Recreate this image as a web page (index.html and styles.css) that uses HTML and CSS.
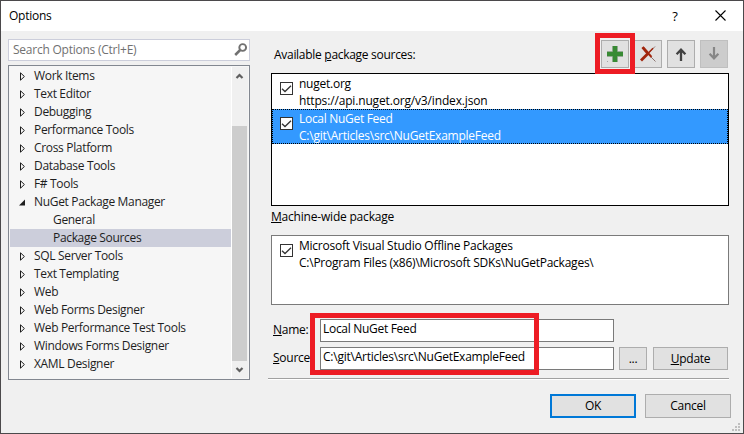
FILE: index.html
```html
<!DOCTYPE html>
<html lang="en">
<head>
<meta charset="utf-8">
<title>Options</title>
<link rel="stylesheet" href="styles.css">
</head>
<body>
<div class="window">
  <header class="titlebar">
    <h1 class="title">Options</h1>
    <span class="help">?</span>
    <svg class="close" width="11" height="11" viewBox="0 0 11 11"><path d="M.5 .5L10.5 10.5M10.5 .5L.5 10.5" stroke="#000" stroke-width="1.1" fill="none"/></svg>
  </header>
  <main class="content">
    <aside class="side">
      <div class="search"><span>Search Options (Ctrl+E)</span>
        <svg width="14" height="14" viewBox="0 0 14 14"><circle cx="8.7" cy="4.5" r="3.4" fill="none" stroke="#717171" stroke-width="1.9"/><path d="M6.2 7L1.2 12" stroke="#717171" stroke-width="2.5"/></svg>
      </div>
      <div class="tree">
        <ul class="items">
          <li><svg class="arrow" width="6" height="9" viewBox="0 0 6 9"><path d="M.5 .8V8.2L4.4 4.5z"/></svg>Work Items</li>
          <li><svg class="arrow" width="6" height="9" viewBox="0 0 6 9"><path d="M.5 .8V8.2L4.4 4.5z"/></svg>Text Editor</li>
          <li><svg class="arrow" width="6" height="9" viewBox="0 0 6 9"><path d="M.5 .8V8.2L4.4 4.5z"/></svg>Debugging</li>
          <li><svg class="arrow" width="6" height="9" viewBox="0 0 6 9"><path d="M.5 .8V8.2L4.4 4.5z"/></svg>Performance Tools</li>
          <li><svg class="arrow" width="6" height="9" viewBox="0 0 6 9"><path d="M.5 .8V8.2L4.4 4.5z"/></svg>Cross Platform</li>
          <li><svg class="arrow" width="6" height="9" viewBox="0 0 6 9"><path d="M.5 .8V8.2L4.4 4.5z"/></svg>Database Tools</li>
          <li><svg class="arrow" width="6" height="9" viewBox="0 0 6 9"><path d="M.5 .8V8.2L4.4 4.5z"/></svg>F# Tools</li>
          <li><svg class="arrow open" width="7" height="9" viewBox="0 0 7 9"><path d="M6 1.5V7.5H0z"/></svg>NuGet Package Manager</li>
          <li class="child">General</li>
          <li class="child selected">Package Sources</li>
          <li><svg class="arrow" width="6" height="9" viewBox="0 0 6 9"><path d="M.5 .8V8.2L4.4 4.5z"/></svg>SQL Server Tools</li>
          <li><svg class="arrow" width="6" height="9" viewBox="0 0 6 9"><path d="M.5 .8V8.2L4.4 4.5z"/></svg>Text Templating</li>
          <li><svg class="arrow" width="6" height="9" viewBox="0 0 6 9"><path d="M.5 .8V8.2L4.4 4.5z"/></svg>Web</li>
          <li><svg class="arrow" width="6" height="9" viewBox="0 0 6 9"><path d="M.5 .8V8.2L4.4 4.5z"/></svg>Web Forms Designer</li>
          <li><svg class="arrow" width="6" height="9" viewBox="0 0 6 9"><path d="M.5 .8V8.2L4.4 4.5z"/></svg>Web Performance Test Tools</li>
          <li><svg class="arrow" width="6" height="9" viewBox="0 0 6 9"><path d="M.5 .8V8.2L4.4 4.5z"/></svg>Windows Forms Designer</li>
          <li><svg class="arrow" width="6" height="9" viewBox="0 0 6 9"><path d="M.5 .8V8.2L4.4 4.5z"/></svg>XAML Designer</li>
        </ul>
        <div class="scrollbar">
          <svg width="15" height="17" viewBox="0 0 15 17"><path d="M4.5 11L7.5 8L10.5 11" fill="none" stroke="#606060" stroke-width="2.2"/></svg>
          <div class="thumb"></div>
          <svg width="15" height="17" viewBox="0 0 15 17"><path d="M4.5 7L7.5 10L10.5 7" fill="none" stroke="#606060" stroke-width="2.2"/></svg>
        </div>
      </div>
    </aside>
    <section class="panel">
      <div class="toolbar">
        <span class="label">Available <u>p</u>ackage sources:</span>
        <button class="tool"><svg width="16" height="16" viewBox="0 0 16 16"><path d="M5 0h6v5h5v6h-5v5h-6v-5h-5v-6h5z" fill="#a5a5a5" opacity=".7"/><path d="M5.7 0h4.6v5.7h5.7v4.6h-5.7v5.7h-4.6v-5.7h-5.7v-4.6h5.7z" fill="#388a34"/><path d="M0 15h1v1h-1z" fill="#a5a5a5"/></svg></button>
        <button class="tool"><svg width="16" height="16" viewBox="0 0 16 16"><path d="M8 8L15.5 15.5M8 7.5L15 .5" stroke="#8a7470" stroke-width="1"/><path d="M3 1.5L11.5 11" stroke="#a1260d" stroke-width="2"/><path d="M2.5 1.2L7.5 7" stroke="#a1260d" stroke-width="2.8"/><path d="M1 14.5L8 7.5" stroke="#a1260d" stroke-width="2.8"/><path d="M7 8.5L13 2.2" stroke="#a1260d" stroke-width="1.5"/></svg></button>
        <button class="tool"><svg width="16" height="16" viewBox="0 0 16 16"><path d="M8 15V4M3.6 8.3L8 3.7L12.4 8.3" fill="none" stroke="#424242" stroke-width="2.3"/></svg></button>
        <button class="tool disabled"><svg width="16" height="16" viewBox="0 0 16 16"><path d="M8 1V12M3.6 7.7L8 12.3L12.4 7.7" fill="none" stroke="#868686" stroke-width="2.2"/></svg></button>
        <div class="mark mark-add"></div>
      </div>
      <div class="list sources">
        <div class="source">
          <span class="check"><svg width="11" height="11" viewBox="0 0 11 11"><path d="M1 5.7L4 8.5L10 2.8"/></svg></span>
          <p>nuget.org<br><span class="url">https://api.nuget.org/v3/index.json</span></p>
        </div>
        <div class="source active">
          <span class="check"><svg width="11" height="11" viewBox="0 0 11 11"><path d="M1 5.7L4 8.5L10 2.8"/></svg></span>
          <p><span class="feed">Local NuGet Feed</span><br><span>C:\git\Articles\src\NuGetExampleFeed</span></p>
        </div>
      </div>
      <div class="machine-label"><u>M</u>achine-wide package</div>
      <div class="list machine">
        <div class="source">
          <span class="check"><svg width="11" height="11" viewBox="0 0 11 11"><path d="M1 5.7L4 8.5L10 2.8"/></svg></span>
          <p>Microsoft Visual Studio Offline Packages<br>C:\Program Files (x86)\Microsoft SDKs\NuGetPackages\</p>
        </div>
      </div>
      <div class="form">
        <label><u>N</u>ame:</label><div class="field feed">Local NuGet Feed</div>
        <label><u>S</u>ource:</label><div class="field">C:\git\Articles\src\NuGetExampleFeed</div>
        <button class="browse">...</button><button class="update"><u>U</u>pdate</button>
        <div class="mark mark-form"></div>
      </div>
      <div class="rule"></div>
    </section>
  </main>
  <footer class="footer">
    <button class="ok">OK</button>
    <button class="cancel">Cancel</button>
  </footer>
  <svg class="grip" width="8" height="8" viewBox="0 0 8 8"><path d="M6 0h2v2h-2zM3 3h2v2h-2zM6 3h2v2h-2zM0 6h2v2h-2zM3 6h2v2h-2zM6 6h2v2h-2z" fill="#bfbfbf"/></svg>
</div>
</body>
</html>
```
FILE: styles.css
```css
* { box-sizing: border-box; margin: 0; padding: 0; }
body { font: 12px/18px "Open Sans", "Noto Sans", sans-serif; letter-spacing: -0.24px; color: #000; }
svg { display: block; flex: none; }
u { text-decoration: underline; text-underline-offset: 1px; text-decoration-thickness: 1px; }
button { font: inherit; letter-spacing: inherit; color: #000; background: #e1e1e1; border: 1px solid #adadad; }

.window { position: relative; width: 744px; height: 434px; border: 1px solid #4b494b; background: #f0f0f0; display: flex; flex-direction: column; }
.titlebar { flex: none; height: 30px; background: #fff; display: flex; align-items: center; padding: 0 17px 1px 8px; }
.title { flex: 1; font-size: 12px; font-weight: 400; padding-top: 1px; }
.help { width: 8px; margin-right: 36px; font-size: 13px; text-align: center; }

.content { flex: none; display: flex; gap: 21px; padding: 8px 14px 0 7px; height: 363px; }
.side { width: 242px; }
.search { height: 22px; border: 1px solid #cccedb; background: #fff; color: #717171; display: flex; align-items: center; justify-content: space-between; padding: 0 1px 0 4px; }
.tree { margin-top: 4px; height: 315px; border: 1px solid #828790; background: #f6f6f6; display: flex; padding: 1px; }
.items { flex: 1; list-style: none; color: #1e1e1e; letter-spacing: -0.33px; }
.items li { height: 18px; display: flex; align-items: center; padding-left: 10px; }
.items .child { padding-left: 43px; }
.items .selected { background: #cccedb; }
.arrow { margin-right: 8px; fill: none; stroke: #1e1e1e; }
.arrow.open { margin-left: -1px; fill: #1e1e1e; stroke: none; }
.scrollbar { width: 17px; border-left: 1px solid #fff; padding-right: 1px; background: #f0f0f0; display: flex; flex-direction: column; }
.thumb { flex: 1; margin-top: 42px; background: #cdcdcd; }

.panel { width: 458px; padding-top: 1px; }
.toolbar { position: relative; height: 33px; display: flex; align-items: flex-start; gap: 5px; padding-right: 1px; }
.label { flex: 1; padding: 6px 0 0 3px; letter-spacing: -0.29px; }
.tool { width: 28px; height: 28px; display: grid; place-items: center; }
.disabled { background: #ccc; border-color: #bfbfbf; }
.mark { position: absolute; z-index: 1; border: 5px solid #ed1c24; }
.mark-add { left: 324px; top: -7px; width: 40px; height: 41px; }

.list { background: #fff; border: 1px solid #000; }
.sources { height: 133px; }
.source { display: flex; height: 35px; line-height: 17px; padding-left: 7px; gap: 6px; border: 1px solid transparent; }
.check { width: 13px; height: 13px; margin-top: 7px; border: 1px solid #333; background: #fff; fill: none; stroke: #333; stroke-width: 1.3; }
.url { letter-spacing: -0.16px; }
.feed { letter-spacing: -0.3px; }
.active { background: #3399ff; color: #fff; border: 1px dotted #000; }
.machine-label { height: 29px; padding-top: 2px; letter-spacing: -0.2px; }
.machine { height: 70px; border-color: #7a7a7a; }

.form { position: relative; margin-top: 14px; display: grid; grid-template-columns: 49px 294px 33px 81px; row-gap: 5px; }
.form label { grid-column: 1; padding: 2px 0 0 2px; }
.field { background: #fff; border: 1px solid #7a7a7a; height: 23px; padding-left: 2px; }
.browse { margin-left: 5px; }
.update { margin-left: 6px; }
.mark-form { left: 39px; top: -6px; width: 229px; height: 62px; }
.rule { margin: 8px 0 0 -3px; border-top: 1px solid #a0a0a0; border-bottom: 1px solid #fff; }

.footer { display: flex; justify-content: flex-end; gap: 9px; padding-right: 12px; }
.footer button { width: 86px; height: 24px; }
.footer .ok { border: 2px solid #0078d7; }
.grip { position: absolute; right: 3px; bottom: 2px; }
```
